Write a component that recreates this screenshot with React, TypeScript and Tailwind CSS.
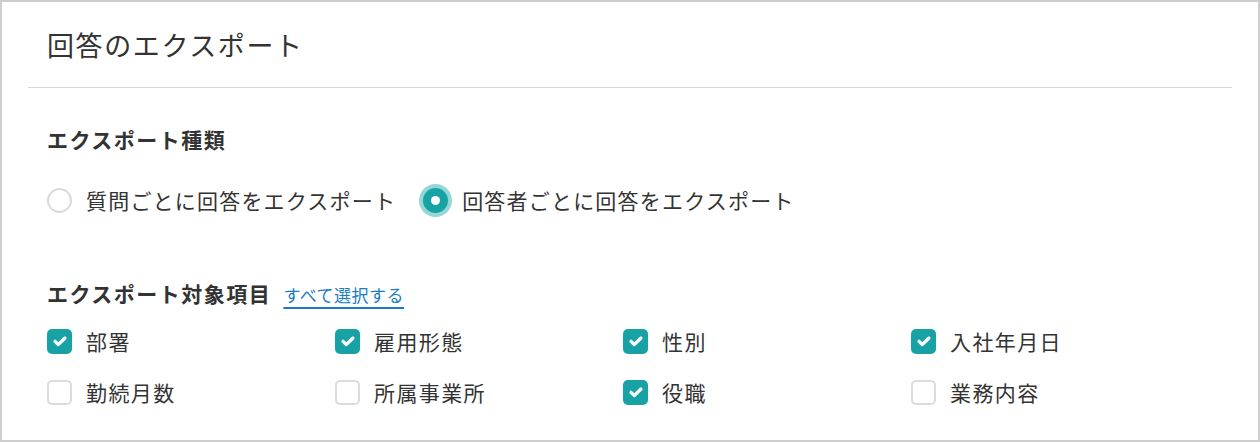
import { useState } from "react";

type ExportType = "question" | "respondent";

const FIELDS: { label: string; checked: boolean }[] = [
    { label: "部署", checked: true },
    { label: "雇用形態", checked: true },
    { label: "性別", checked: true },
    { label: "入社年月日", checked: true },
    { label: "勤続月数", checked: false },
    { label: "所属事業所", checked: false },
    { label: "役職", checked: true },
    { label: "業務内容", checked: false },
];

const Radio = ({ checked, label, onClick }: { checked: boolean; label: string; onClick: () => void }) => (
    <button type="button" onClick={onClick} className="flex items-center gap-[14px]">
        {checked ? (
            <span className="flex h-[25px] w-[25px] items-center justify-center rounded-full bg-[#17a3a6] ring-4 ring-[#17a3a6]/45">
                <span className="h-[9px] w-[9px] rounded-full bg-white" />
            </span>
        ) : (
            <span className="h-[25px] w-[25px] rounded-full border-2 border-[#dadada] bg-white" />
        )}
        <span className="text-[21px] leading-[32px] tracking-[1.2px] text-[#333]">{label}</span>
    </button>
);

const Checkbox = ({ checked, label, onClick }: { checked: boolean; label: string; onClick: () => void }) => (
    <button type="button" onClick={onClick} className="flex items-center gap-[14px]">
        {checked ? (
            <span className="flex h-[25px] w-[25px] items-center justify-center rounded-[5px] bg-[#17a3a6]">
                <svg className="h-[16px] w-[16px]" viewBox="0 0 16 16" fill="none">
                    <path d="M3 8.3l3.3 3.2L13 5" stroke="white" strokeWidth={3.2} strokeLinecap="round" strokeLinejoin="round" />
                </svg>
            </span>
        ) : (
            <span className="h-[25px] w-[25px] rounded-[5px] border-2 border-[#dcdcdc] bg-white" />
        )}
        <span className="text-[21px] leading-[26px] tracking-[1.4px] text-[#333]">{label}</span>
    </button>
);

export default function App() {
    const [exportType, setExportType] = useState<ExportType>("respondent");
    const [fields, setFields] = useState(FIELDS);

    const toggle = (i: number) =>
        setFields((prev) => prev.map((f, j) => (j === i ? { ...f, checked: !f.checked } : f)));

    return (
        <div
            className="h-[442px] w-[1260px] overflow-hidden border-2 border-[#cdcdcd] bg-white"
            style={{ fontFamily: '"Noto Sans CJK JP", "Noto Sans", sans-serif' }}
        >
            <div className="px-[26px]">
                {/* Header */}
                <div className="border-b border-[#d8d8d8] pb-[26px] pl-[19px] pt-[27px]">
                    <h1 className="text-[27px] font-normal leading-[32px] tracking-[1.6px] text-[#333]">回答のエクスポート</h1>
                </div>

                <div className="pl-[19px]">
                    {/* Export type */}
                    <h2 className="mt-[37px] text-[21px] font-bold leading-[28px] tracking-[1.5px] text-[#333]">エクスポート種類</h2>
                    <div className="mt-[31px] flex items-center gap-[27px]">
                        <Radio
                            checked={exportType === "question"}
                            label="質問ごとに回答をエクスポート"
                            onClick={() => setExportType("question")}
                        />
                        <Radio
                            checked={exportType === "respondent"}
                            label="回答者ごとに回答をエクスポート"
                            onClick={() => setExportType("respondent")}
                        />
                    </div>

                    {/* Target fields */}
                    <div className="mt-[63px] flex items-baseline gap-[12px]">
                        <h2 className="text-[21px] font-bold leading-[28px] tracking-[1.5px] text-[#333]">エクスポート対象項目</h2>
                        <button
                            type="button"
                            onClick={() => setFields((prev) => prev.map((f) => ({ ...f, checked: true })))}
                            className="text-[17px] leading-[24px] tracking-[0.5px] text-[#1b7cc6] underline decoration-2 underline-offset-[5px]"
                        >
                            すべて選択する
                        </button>
                    </div>
                    <div className="mt-[21px] grid grid-cols-[288px_288px_288px_288px] gap-y-[25px]">
                        {fields.map((f, i) => (
                            <Checkbox key={f.label} checked={f.checked} label={f.label} onClick={() => toggle(i)} />
                        ))}
                    </div>
                </div>
            </div>
        </div>
    );
}
